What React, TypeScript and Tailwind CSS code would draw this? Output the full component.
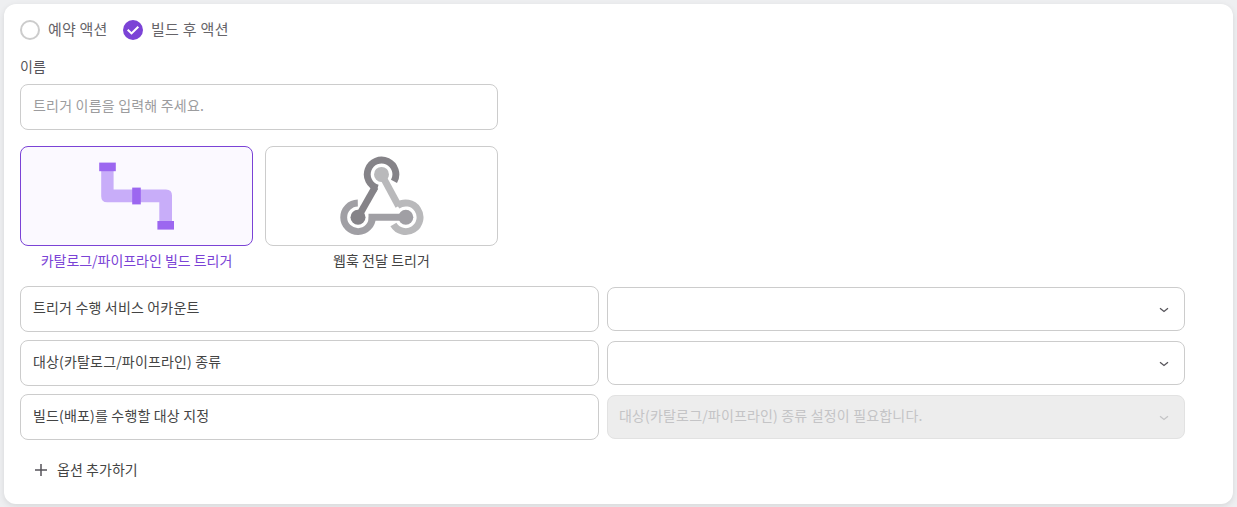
import React from "react";

function PipelineIcon() {
  return (
    <svg width="76" height="68" viewBox="0 0 76 68" fill="none">
      <path d="M2.2 8H14.6V27.6H67Q73 27.6 73 33.6V60H60.3V40.2H8.2Q2.2 40.2 2.2 34.2Z" fill="#c8adf9" />
      <rect x="0.2" y="0.6" width="16.6" height="8.6" fill="#9c67f0" />
      <rect x="33.2" y="25.6" width="8.6" height="16.8" fill="#9c67f0" />
      <rect x="58.4" y="59" width="16.6" height="8.6" fill="#9c67f0" />
    </svg>
  );
}

function WebhookIcon() {
  return (
    <svg width="84" height="80" viewBox="0 0 84 80" fill="none">
      <g stroke="#b9b9bb" strokeWidth="6.9">
        <path d="M41.5 18.4L58.6 50" />
        <path d="M57.4 49.7A14.3 14.3 0 1 1 53.4 68.5" />
      </g>
      <g stroke="#a09fa4" strokeWidth="6.9">
        <path d="M28.5 61.3H66" />
        <path d="M17.8 47A14.3 14.3 0 1 0 32.3 61" />
      </g>
      <g stroke="#858388" strokeWidth="6.9">
        <path d="M18 61.3L35.2 31" />
        <path d="M37.6 32.1A14.3 14.3 0 1 1 54 25.4" />
      </g>
      <circle cx="41.5" cy="18.4" r="7.5" fill="#b9b9bb" />
      <circle cx="65.8" cy="61.3" r="7.5" fill="#a09fa4" />
      <circle cx="18" cy="61.3" r="7.5" fill="#858388" />
    </svg>
  );
}

function Chevron() {
  return (
    <svg className="translate-y-px" width="10" height="6" viewBox="0 0 10 6" fill="none" stroke="currentColor" strokeWidth="1.3">
      <path d="M1 1.2L5 4.4L9 1.2" />
    </svg>
  );
}

function OptionRow({ label, placeholder }: { label: string; placeholder?: string }) {
  return (
    <div className="flex items-center gap-2">
      <div className="flex h-[46px] w-[579px] items-center rounded-lg border border-[#cccccc] pb-0.5 pl-3 text-[#444444]">
        <span className="-translate-y-px">{label}</span>
      </div>
      <div
        className={
          placeholder
            ? "flex h-11 w-[578px] items-center justify-between rounded-lg border border-[#e2e2e2] bg-[#ededed] pr-[15px] pl-[11px] text-[#c4c4c6]"
            : "flex h-11 w-[578px] items-center justify-between rounded-lg border border-[#cccccc] pr-[15px] pl-[11px] text-[#555359]"
        }
      >
        <span className="-translate-y-0.5">{placeholder}</span>
        <Chevron />
      </div>
    </div>
  );
}

export default function App() {
  return (
    <div className="h-[507px] overflow-hidden bg-[#eeeff1] p-1 font-['Noto_Sans_CJK_KR','Noto_Sans',sans-serif] text-[14px] leading-5 tracking-[0.17px]">
      <main className="h-[500px] rounded-xl bg-white px-4 pt-4 shadow-[0_2px_6px_rgba(0,0,0,0.1)]">
        <div className="flex h-5 items-center text-[15px] tracking-[0.2px] text-[#666469]">
          <span className="size-5 rounded-full border-2 border-[#cccccc]" />
          <span className="ml-2 w-[75px] -translate-y-px">예약 액션</span>
          <svg width="20" height="20" viewBox="0 0 20 20" fill="none">
            <circle cx="10" cy="10" r="10" fill="#7b43d6" />
            <path d="M4.7 9.8L8.5 13.4L15.3 6.8" stroke="white" strokeWidth="2.1" />
          </svg>
          <span className="ml-2 -translate-y-px tracking-[0.3px]">빌드 후 액션</span>
        </div>
        <label className="mt-4 block h-5 text-[#555359]">이름</label>
        <input
          className="mt-2 block h-[46px] w-[478px] rounded-lg border border-[#cccccc] px-3 pb-1 tracking-[0.2px] outline-none placeholder:text-[#9c9c9e]"
          placeholder="트리거 이름을 입력해 주세요."
        />
        <div className="mt-4 flex gap-3 text-center tracking-[-0.03px]">
          <div className="w-[233px] text-[#7b43d6]">
            <div className="flex h-[100px] items-center justify-center rounded-lg border border-[#7b43d6] bg-[#fbf9ff]">
              <PipelineIcon />
            </div>
            <div className="mt-1">카탈로그/파이프라인 빌드 트리거</div>
          </div>
          <div className="w-[233px] text-[#444444]">
            <div className="flex h-[100px] items-center justify-center rounded-lg border border-[#cccccc]">
              <WebhookIcon />
            </div>
            <div className="mt-1 tracking-[0.05px]">웹훅 전달 트리거</div>
          </div>
        </div>
        <div className="mt-4 flex flex-col gap-2">
          <OptionRow label="트리거 수행 서비스 어카운트" />
          <OptionRow label="대상(카탈로그/파이프라인) 종류" />
          <OptionRow label="빌드(배포)를 수행할 대상 지정" placeholder="대상(카탈로그/파이프라인) 종류 설정이 필요합니다." />
        </div>
        <button className="mt-5 ml-[15px] flex h-5 items-center gap-2.5 text-[#444444]">
          <svg width="12" height="12" viewBox="0 0 12 12" stroke="#555359" strokeWidth="1.5">
            <path d="M0 6H12M6 0V12" />
          </svg>
          <span className="-translate-y-px tracking-[0.05px]">옵션 추가하기</span>
        </button>
      </main>
    </div>
  );
}
